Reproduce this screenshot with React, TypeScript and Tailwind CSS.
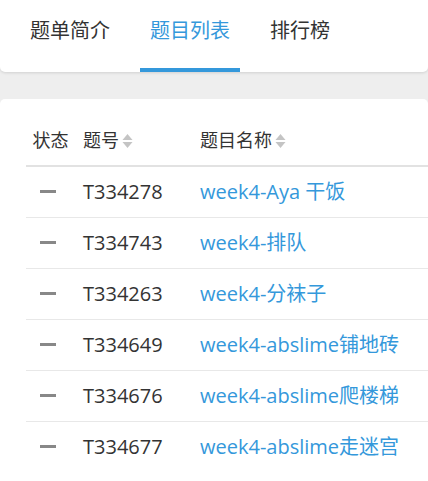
import React from 'react';

const tabs = ['题单简介', '题目列表', '排行榜'];

const rows = [
  { id: 'T334278', name: 'week4-Aya 干饭' },
  { id: 'T334743', name: 'week4-排队' },
  { id: 'T334263', name: 'week4-分袜子' },
  { id: 'T334649', name: 'week4-abslime铺地砖' },
  { id: 'T334676', name: 'week4-abslime爬楼梯' },
  { id: 'T334677', name: 'week4-abslime走迷宫' },
];

const SortIcon = () => (
  <svg width="11" height="16" viewBox="0 0 11 16" className="ml-[3px] inline-block">
    <path d="M5.5 1 L10.5 7 L0.5 7 Z" fill="#c4c4c4" />
    <path d="M0.5 9 L10.5 9 L5.5 15 Z" fill="#c4c4c4" />
  </svg>
);

const App = () => {
  return (
    <div
      className="w-[428px] h-[481px] overflow-hidden bg-[#eeeeee] text-[#333]"
      style={{ fontFamily: '"Open Sans", "Noto Sans CJK SC", sans-serif' }}
    >
      <div className="bg-white rounded-b-[5px] shadow-[0_1px_3px_rgba(0,0,0,0.12)] h-[72px] flex pl-5 gap-5">
        {tabs.map((t, i) => (
          <div
            key={t}
            className={
              'h-full px-2.5 flex items-start pt-[16px] text-[20px] border-b-4 ' +
              (i === 1 ? 'text-[#3498db] border-[#3498db]' : 'border-transparent')
            }
          >
            {t}
          </div>
        ))}
      </div>

      <div className="mt-[27px] bg-white rounded-t-[5px] h-[400px] pl-[26px] pt-[22px]">
        <table className="w-[440px] border-collapse">
          <thead>
            <tr className="border-b-2 border-[#e2e2e2] h-[45px] text-[18px]">
              <th className="w-[49px] font-normal text-center align-top pt-[6px]">状态</th>
              <th className="w-[117px] font-normal text-left pl-2 align-top pt-[6px]">
                <span className="inline-flex items-center">
                  题号
                  <SortIcon />
                </span>
              </th>
              <th className="font-normal text-left pl-2 align-top pt-[6px]">
                <span className="inline-flex items-center">
                  题目名称
                  <SortIcon />
                </span>
              </th>
            </tr>
          </thead>
          <tbody className="text-[20px]">
            {rows.map((r, i) => (
              <tr
                key={r.id}
                className={'h-[51px] ' + (i < rows.length - 1 ? 'border-b border-[#e8e8e8]' : '')}
              >
                <td className="pl-[14px]">
                  <div className="w-4 h-[3px] bg-[#888]" />
                </td>
                <td className="pl-2">{r.id}</td>
                <td className="pl-2 text-[#3498db]">{r.name}</td>
              </tr>
            ))}
          </tbody>
        </table>
      </div>
    </div>
  );
};

export default App;
